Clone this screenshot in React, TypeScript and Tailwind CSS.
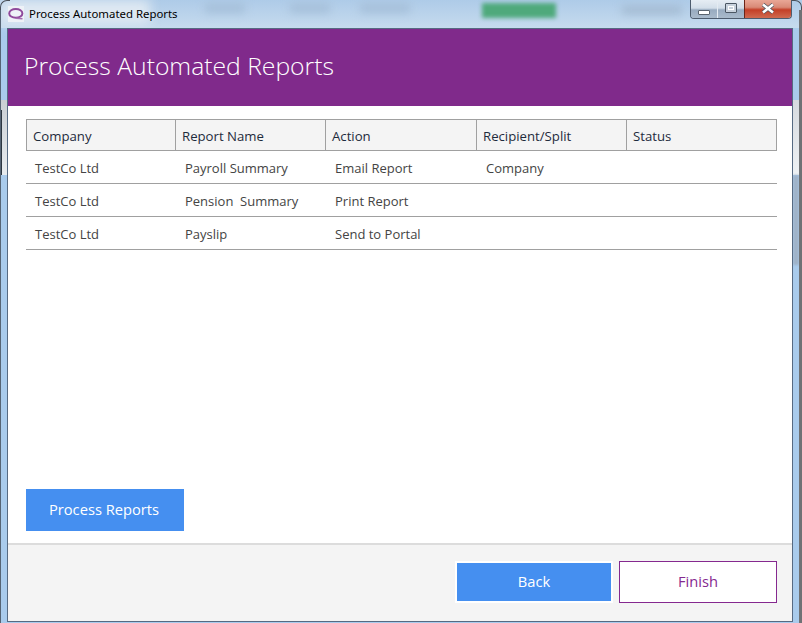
import React from 'react';

const font = "font-['Open_Sans','Noto_Sans',sans-serif]";
const gridCols = 'grid grid-cols-[149px_150px_151px_150px_151px]';

const columns = ['Company', 'Report Name', 'Action', 'Recipient/Split', 'Status'];

const rows = [
  ['TestCo Ltd', 'Payroll Summary', 'Email Report', 'Company', ''],
  ['TestCo Ltd', 'Pension\u00a0 Summary', 'Print Report', '', ''],
  ['TestCo Ltd', 'Payslip', 'Send to Portal', '', ''],
];

function AppIcon() {
  return (
    <div className="w-4 h-4 bg-[#eef2f7] flex items-center justify-center">
      <svg width="16" height="16" viewBox="0 0 16 16">
        <ellipse cx="7.8" cy="7.4" rx="6.6" ry="4.4" fill="none" stroke="#8f4a9c" strokeWidth="2" />
        <path d="M8 12.2 L14.5 12.8" stroke="#a56db0" strokeWidth="1.6" />
      </svg>
    </div>
  );
}

function CaptionButtons() {
  return (
    <div className="absolute left-[690px] top-0 h-[19px] w-[102px] flex rounded-b-[4px] border border-t-0 border-[#4d5c6e] overflow-hidden">
      <div className="w-[27px] border-r border-[#e4ebf2] bg-[linear-gradient(#e6edf4_0%,#d3dee9_45%,#98abc0_55%,#a9bacb_100%)] flex items-center justify-center">
        <div className="w-[12px] h-[5px] mt-[6px] bg-white border border-[#59636e] rounded-[1px]" />
      </div>
      <div className="w-[27px] border-r border-[#6b2418] bg-[linear-gradient(#e6edf4_0%,#d3dee9_45%,#98abc0_55%,#a9bacb_100%)] flex items-center justify-center">
        <div className="w-[12px] h-[10px] mb-[2px] bg-[#c8d2dd] border border-[#4a5663] flex items-center justify-center rounded-[1px]">
          <div className="w-[6px] h-[4px] border border-white" />
        </div>
      </div>
      <div className="flex-1 bg-[linear-gradient(#e9a796_0%,#d98a77_40%,#c43f27_55%,#cf6a50_100%)] flex items-center justify-center">
        <svg width="16" height="12" viewBox="0 0 16 12">
          <path d="M3 1.5 L13 9.5 M13 1.5 L3 9.5" stroke="#4a535e" strokeWidth="4" />
          <path d="M3 1.5 L13 9.5 M13 1.5 L3 9.5" stroke="#ffffff" strokeWidth="2.6" />
        </svg>
      </div>
    </div>
  );
}

export default function App() {
  return (
    <div className={`${font} relative w-[802px] h-[623px] overflow-hidden flex flex-col bg-[#a9cbec]`}>
      {/* blurred desktop showing through the glass frame */}
      <div className="absolute inset-x-0 top-0 h-[28px] bg-gradient-to-b from-[#aecbe8] to-[#c6dbee]" />
      <div className="absolute left-0 top-0 w-[150px] h-[24px] bg-[#dfe9f2] blur-[6px]" />
      <div className="absolute left-[482px] top-[3px] w-[74px] h-[15px] bg-[#4fa97c] blur-[2px]" />
      <div className="absolute left-[205px] top-[3px] w-[40px] h-[10px] bg-[#a6c0da] blur-[4px]" />
      <div className="absolute left-[290px] top-[3px] w-[40px] h-[10px] bg-[#a6c0da] blur-[4px]" />
      <div className="absolute left-[360px] top-[3px] w-[50px] h-[10px] bg-[#a6c0da] blur-[4px]" />
      <div className="absolute left-[622px] top-[6px] w-[60px] h-[8px] bg-[#a2b9d0] blur-[4px]" />

      {/* window edges */}
      <div className="absolute left-0 top-0 w-[10px] h-[10px] border-l border-t border-[#4a5058] rounded-tl-[7px]" />
      <div className="absolute right-0 top-0 w-[10px] h-[10px] border-r border-t border-[#4a5058] rounded-tr-[7px]" />
      <div className="absolute left-0 top-[10px] bottom-0 w-px bg-[#566474]" />
      <div className="absolute left-[1px] top-[100px] w-[6px] h-[75px] bg-gradient-to-b from-[#c9ced3] to-[#e8ecef]" />
      <div className="absolute left-[1px] top-[110px] w-px h-[65px] bg-[#2c3640]" />
      <div className="absolute left-[793px] top-[100px] w-[6px] h-[75px] bg-gradient-to-b from-[#d6dadf] to-[#eef1f4]" />
      <div className="absolute left-[793px] top-[175px] w-[6px] h-[90px] bg-[#9fb3c9] blur-[1px]" />
      <div className="absolute left-[799px] top-[10px] bottom-0 w-[3px] bg-[#6f7275]" />

      <div className="relative h-[28px] shrink-0 flex items-center pl-[8px] gap-[5px]">
        <AppIcon />
        <span className="text-[11.4px] text-black font-['Noto_Sans',sans-serif]">Process Automated Reports</span>
      </div>
      <CaptionButtons />

      <div className="relative ml-[7px] w-[786px] h-[594px] border border-[#566a82] flex flex-col bg-white">
        <div className="h-[77px] shrink-0 bg-[#802a8b] flex items-center pl-[16px] pb-[3px]">
          <h1 className="text-[24.7px] font-light text-white">Process Automated Reports</h1>
        </div>

        <div className="flex-1 flex flex-col justify-between pl-[18px] pt-[13px] pb-[12px]">
          <div className="w-[751px]">
            <div className={`${gridCols} h-[32px] border border-[#a0a0a0] bg-[#f4f4f4] text-[13.2px] text-[#1e2b3c]`}>
              {columns.map((col, i) => (
                <div key={col} className={`pl-[6px] pt-[4px] flex items-center ${i < 4 ? 'border-r border-[#a0a0a0]' : ''}`}>
                  {col}
                </div>
              ))}
            </div>
            {rows.map((row, r) => (
              <div key={r} className={`${gridCols} h-[33px] border-b border-[#a0a0a0] text-[13px] text-[#444444]`}>
                {row.map((cell, i) => (
                  <div key={i} className={`pt-[4px] flex items-center ${i === 0 ? 'pl-[9px]' : 'pl-[10px]'}`}>{cell}</div>
                ))}
              </div>
            ))}
          </div>
          <button className="w-[158px] h-[42px] pb-[2px] pr-[2px] bg-[#458ff0] text-white text-[14.7px]">Process Reports</button>
        </div>

        <div className="h-[78px] shrink-0 bg-[#f4f4f4] border-t-2 border-[#dcdcdc] flex justify-end items-start gap-[6px] pt-[16px] pr-[15px]">
          <button className="w-[158px] h-[42px] pb-[2px] bg-[#458ff0] border-2 border-white text-white text-[14.7px]">Back</button>
          <button className="w-[158px] h-[42px] pb-[2px] bg-white border border-[#85298f] text-[#85298f] text-[14.7px]">Finish</button>
        </div>
      </div>
    </div>
  );
}
